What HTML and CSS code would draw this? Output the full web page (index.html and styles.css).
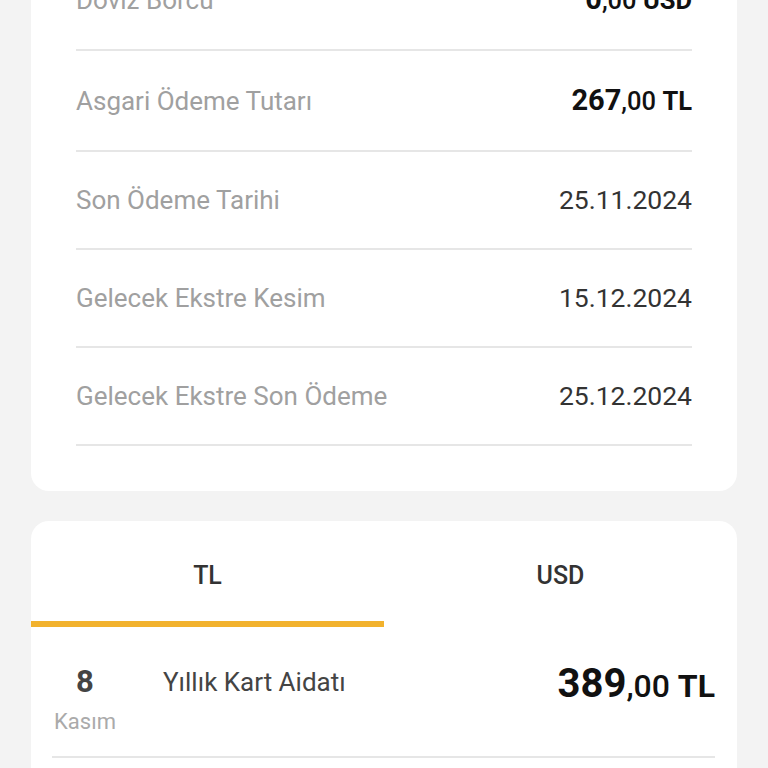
FILE: index.html
```html
<!DOCTYPE html>
<html lang="tr">
<head>
    <meta charset="UTF-8">
    <meta name="viewport" content="width=device-width, initial-scale=1.0">
    <title>Kart Ekstresi</title>
    <link rel="stylesheet" href="styles.css">
</head>
<body>
    <div class="screen">
        <div class="card statement">
            <div class="info-row">
                <span class="info-label">Döviz Borcu</span>
                <span class="info-value strong"><b>0</b>,00 <b>USD</b></span>
            </div>
            <div class="info-row">
                <span class="info-label">Asgari Ödeme Tutarı</span>
                <span class="info-value strong"><b>267</b>,00 <b>TL</b></span>
            </div>
            <div class="info-row">
                <span class="info-label">Son Ödeme Tarihi</span>
                <span class="info-value">25.11.2024</span>
            </div>
            <div class="info-row">
                <span class="info-label">Gelecek Ekstre Kesim</span>
                <span class="info-value">15.12.2024</span>
            </div>
            <div class="info-row">
                <span class="info-label">Gelecek Ekstre Son Ödeme</span>
                <span class="info-value">25.12.2024</span>
            </div>
        </div>

        <div class="card transactions">
            <div class="tabs">
                <div class="tab active">TL</div>
                <div class="tab">USD</div>
            </div>

            <div class="tx-list">
                <div class="tx-row">
                    <div class="tx-date">
                        <span class="tx-day">8</span>
                        <span class="tx-month">Kasım</span>
                    </div>
                    <div class="tx-desc">Yıllık Kart Aidatı</div>
                    <div class="tx-amount"><b>389</b>,00 <b>TL</b></div>
                </div>
            </div>
        </div>
    </div>
</body>
</html>
```

FILE: styles.css
```css
* {
    margin: 0;
    padding: 0;
    box-sizing: border-box;
    font-family: Roboto, 'Noto Sans', sans-serif;
}

:root {
    --page-bg: #f3f3f3;
    --card-bg: #ffffff;
    --label: #a0a0a0;
    --text: #333333;
    --strong: #111111;
    --line: #e6e6e6;
    --accent: #f2b22d;
}

body {
    background: var(--page-bg);
    color: var(--text);
    overflow: hidden;
}

/* page is scrolled a bit, first row sits under the top edge */
.screen {
    margin-top: -50px;
    padding: 0 31px 40px;
}

.card {
    background: var(--card-bg);
    border-radius: 18px;
}

.statement {
    padding: 0 45px 45px;
    margin-bottom: 30px;
}

.info-row {
    display: flex;
    justify-content: space-between;
    align-items: center;
    padding: 33px 0;
    border-bottom: 2px solid var(--line);
    line-height: 30px;
}

.info-label {
    font-size: 26px;
    color: var(--label);
}

.info-value {
    font-size: 26.5px;
    color: var(--text);
}

.info-value.strong {
    color: var(--strong);
    font-size: 25.5px;
    font-weight: 500;
    line-height: 32px;
}

.info-value.strong b {
    font-weight: 700;
}

.info-value.strong b:first-child {
    font-size: 29px;
}

.tabs {
    display: flex;
}

.tab {
    flex: 1;
    text-align: center;
    font-size: 25px;
    font-weight: 500;
    line-height: 30px;
    color: var(--text);
    padding: 40px 0 30px;
    border-bottom: 6px solid transparent;
}

.tab.active {
    border-bottom-color: var(--accent);
}

.tx-list {
    padding: 0 22px 60px 21px;
}

.tx-row {
    display: flex;
    align-items: flex-start;
    padding: 37px 0 22px;
    border-bottom: 2px solid var(--line);
}

.tx-date {
    display: flex;
    flex-direction: column;
    align-items: center;
    width: 66px;
    gap: 10px;
}

.tx-day {
    font-size: 31px;
    font-weight: 700;
    line-height: 36px;
    color: #444444;
}

.tx-month {
    font-size: 22px;
    line-height: 24px;
    color: #aaaaaa;
}

.tx-desc {
    flex: 1;
    margin-left: 45px;
    font-size: 26px;
    line-height: 36px;
    color: #444444;
}

.tx-amount {
    font-size: 32px;
    font-weight: 500;
    line-height: 40px;
    color: var(--strong);
}

.tx-amount b {
    font-weight: 700;
}

.tx-amount b:first-child {
    font-size: 40px;
}
```
